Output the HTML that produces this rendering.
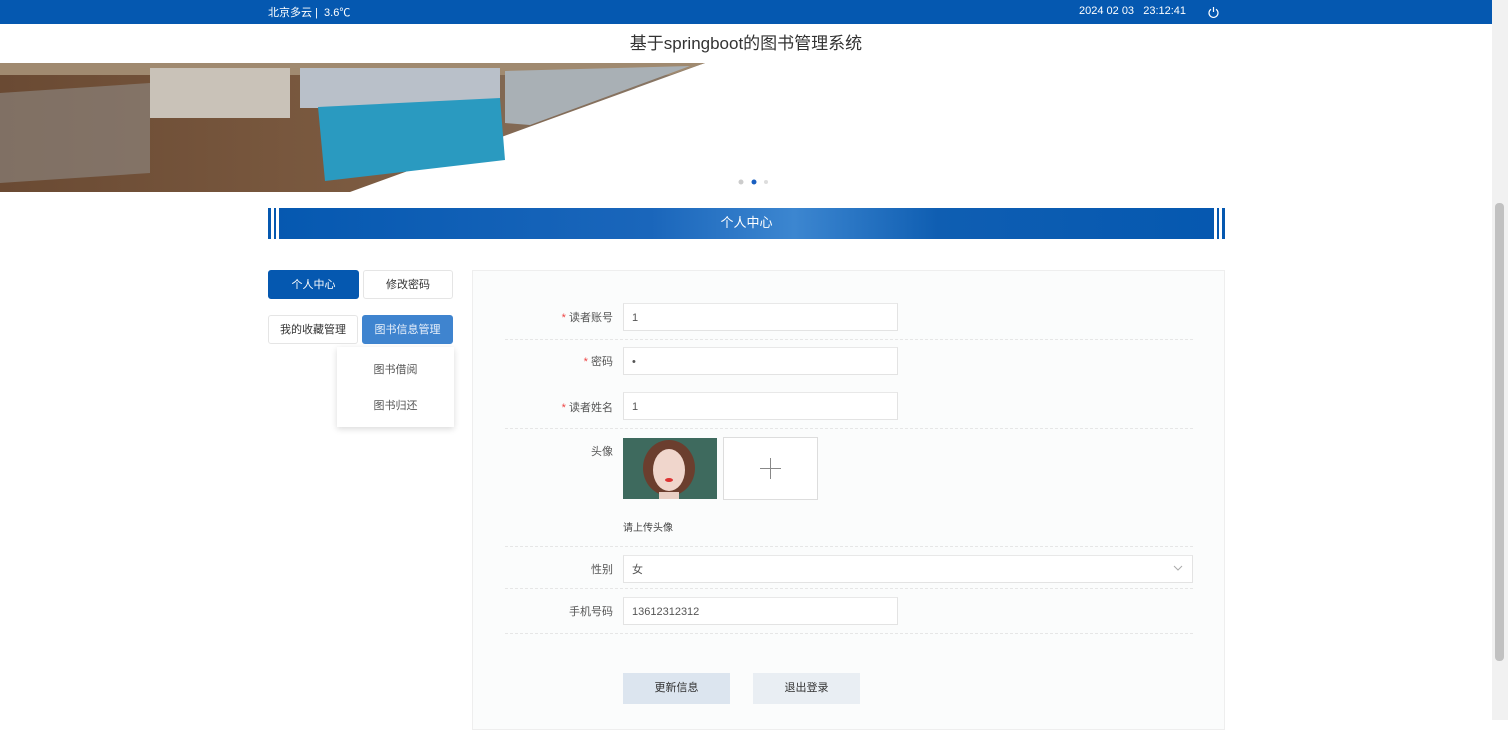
<!DOCTYPE html>
<html><head><meta charset="utf-8"><style>
*{margin:0;padding:0;box-sizing:border-box}
body{width:1508px;height:720px;overflow:hidden;background:#fff;font-family:"Liberation Sans","Noto Sans CJK SC",sans-serif;position:relative;font-size:11px;color:#333}
.top{position:absolute;left:0;top:0;width:1492px;height:24px;background:#0558b0;color:#fff;font-size:11px}
.title{position:absolute;top:29px;left:0;width:1492px;text-align:center;font-size:17px;color:#333}
.abs{position:absolute}
.btn{position:absolute;height:29px;line-height:29px;text-align:center;font-size:11px;border:1px solid #e5e5e5;border-radius:3px;color:#333}
.lbl{position:absolute;width:110px;text-align:right;font-size:11px;color:#555;left:503px}
.lbl b{color:#e44;font-weight:normal}
.inp{position:absolute;left:623px;width:275px;height:28px;border:1px solid #e3e3e3;border-top-color:#e8e8e8;background:#fff;padding-left:8px;line-height:28px;font-size:11px;color:#555}
.dash{position:absolute;left:505px;width:688px;border-top:1px dashed #e6e6e6}
</style></head><body>
<div class="top"><span class="abs" style="left:268px;top:4px">北京多云 |&nbsp; 3.6℃</span><span class="abs" style="left:1079px;top:5px">2024 02 03 &nbsp; 23:12:41</span>
<svg class="abs" style="left:1207px;top:6px" width="13" height="13" viewBox="0 0 13 13"><path d="M4 3.2A4.5 4.5 0 1 0 9 3.2M6.5 1v5" stroke="#fff" stroke-width="1.2" fill="none"/></svg></div>
<div class="title">基于springboot的图书管理系统</div>
<svg class="abs" style="left:0;top:63px" width="1492" height="129">
<defs><linearGradient id="g" x1="0" x2="1"><stop offset="0" stop-color="#6a4a33"/><stop offset=".5" stop-color="#7b5a40"/><stop offset="1" stop-color="#8a7a6a"/></linearGradient></defs>
<polygon points="0,0 705,0 350,129 0,129" fill="url(#g)"/>
<polygon points="0,0 705,0 670,12 0,12" fill="#a08a70"/>
<polygon points="150,5 290,5 290,55 150,55" fill="#c9c2b8"/>
<polygon points="300,5 500,5 500,45 300,45" fill="#b9c0c9"/>
<polygon points="318,44 500,35 505,97 325,118" fill="#2a9ac0"/>
<polygon points="505,8 690,3 530,62 505,60" fill="#a9b0b5"/>
<polygon points="0,30 150,20 150,110 0,120" fill="#8f8a85" opacity=".6"/>
<circle cx="741" cy="119" r="2.5" fill="#ccc"/><circle cx="754" cy="119" r="2.5" fill="#1a5fc0"/><circle cx="766" cy="119" r="2" fill="#ddd"/>
</svg>
<div class="abs" style="left:268px;top:208px;width:957px;height:31px;background:linear-gradient(90deg,#0558b0 0%,#1a66bb 40%,#3c86d0 55%,#0f5eb2 70%,#0558b0 100%)"></div>
<div class="abs" style="left:271px;top:208px;width:3px;height:31px;background:#fff"></div>
<div class="abs" style="left:276px;top:208px;width:3px;height:31px;background:#fff"></div>
<div class="abs" style="left:1214px;top:208px;width:3px;height:31px;background:#fff"></div>
<div class="abs" style="left:1219px;top:208px;width:3px;height:31px;background:#fff"></div>
<div class="abs" style="left:268px;top:212px;width:957px;text-align:center;color:#fff;font-size:13px">个人中心</div>
<div class="btn" style="left:268px;top:270px;width:91px;background:#0558b0;color:#fff;border-color:#0558b0">个人中心</div>
<div class="btn" style="left:363px;top:270px;width:90px">修改密码</div>
<div class="btn" style="left:268px;top:315px;width:90px">我的收藏管理</div>
<div class="btn" style="left:362px;top:315px;width:91px;background:#3f84cf;color:#e8f0fa;border-color:#3f84cf">图书信息管理</div>
<div class="abs" style="left:337px;top:347px;width:117px;height:80px;background:#fff;box-shadow:0 2px 6px rgba(0,0,0,.15);font-size:11px;color:#555">
<div class="abs" style="left:0;top:14px;width:117px;text-align:center">图书借阅</div>
<div class="abs" style="left:0;top:50px;width:117px;text-align:center">图书归还</div></div>
<div class="abs" style="left:472px;top:270px;width:753px;height:460px;border:1px solid #eee;background:#fbfcfc"></div>
<div class="lbl" style="top:309px"><b>* </b>读者账号</div><div class="inp" style="top:303px">1</div>
<div class="dash" style="top:339px"></div>
<div class="lbl" style="top:353px"><b>* </b>密码</div><div class="inp" style="top:347px">•</div>
<div class="lbl" style="top:399px"><b>* </b>读者姓名</div><div class="inp" style="top:392px">1</div>
<div class="dash" style="top:428px"></div>
<div class="lbl" style="top:443px">头像</div>
<svg class="abs" style="left:623px;top:438px" width="94" height="61"><rect width="94" height="61" fill="#3e6a5e"/><ellipse cx="46" cy="30" rx="26" ry="28" fill="#6b3e2e"/><ellipse cx="46" cy="32" rx="16" ry="21" fill="#f0d6cc"/><rect x="36" y="54" width="20" height="7" fill="#e9cfc4"/><ellipse cx="46" cy="42" rx="4" ry="2" fill="#d33"/></svg>
<div class="abs" style="left:723px;top:437px;width:95px;height:63px;border:1px solid #ddd;background:#fff"></div>
<div class="abs" style="left:760px;top:468px;width:21px;height:1px;background:#888"></div>
<div class="abs" style="left:770px;top:458px;width:1px;height:21px;background:#888"></div>
<div class="abs" style="left:623px;top:519px;font-size:10px;color:#444">请上传头像</div>
<div class="dash" style="top:546px"></div>
<div class="lbl" style="top:561px">性别</div>
<div class="inp" style="top:555px;width:570px">女</div>
<svg class="abs" style="left:1173px;top:564px" width="10" height="8"><path d="M1 2l4 4 4-4" stroke="#aaa" fill="none"/></svg>
<div class="dash" style="top:588px"></div>
<div class="lbl" style="top:603px">手机号码</div><div class="inp" style="top:597px">13612312312</div>
<div class="dash" style="top:633px"></div>
<div class="abs" style="left:623px;top:673px;width:107px;height:31px;background:#dce5ef;text-align:center;line-height:31px;color:#333">更新信息</div>
<div class="abs" style="left:753px;top:673px;width:107px;height:31px;background:#e9eef3;text-align:center;line-height:31px;color:#333">退出登录</div>
<div class="abs" style="left:1492px;top:0;width:16px;height:720px;background:#f1f1f1"></div>
<div class="abs" style="left:1495px;top:203px;width:9px;height:458px;background:#c1c1c1;border-radius:4px"></div>
</body></html>
